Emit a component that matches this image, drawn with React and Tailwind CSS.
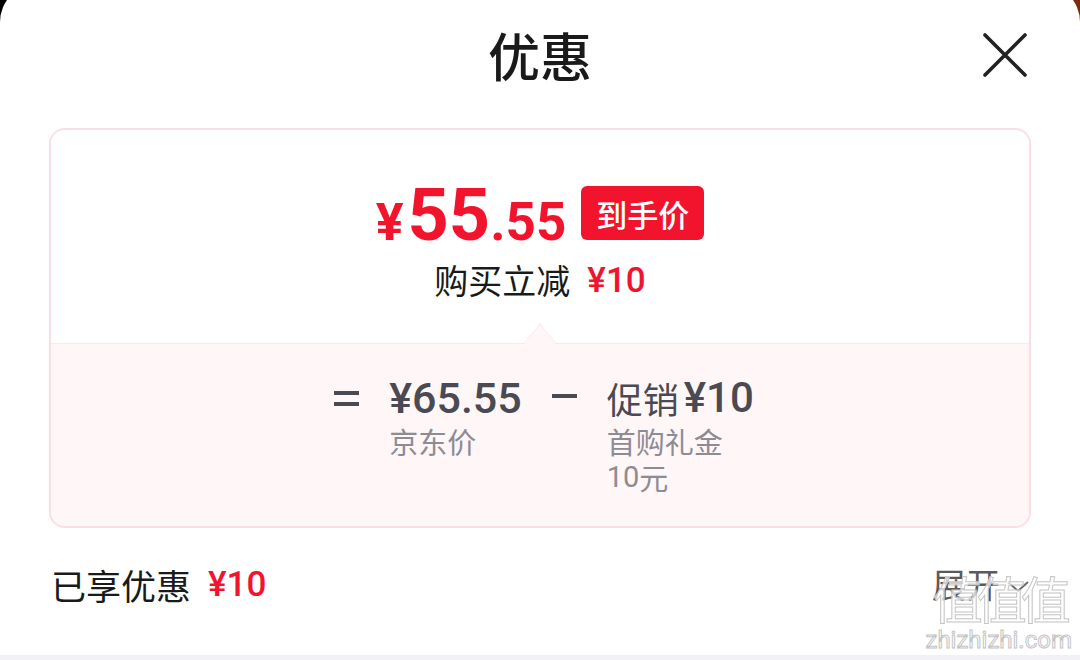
import React from "react";

const NUM = { fontFamily: 'Roboto, "Noto Sans CJK SC", sans-serif' };
const CJK = { fontFamily: '"Noto Sans CJK SC", "Noto Sans", sans-serif' };

function CloseIcon() {
  return (
    <svg width="44" height="44" viewBox="0 0 44 44" fill="none">
      <path d="M2 2 L42 42 M42 2 L2 42" stroke="#222" strokeWidth="3.6" strokeLinecap="round" />
    </svg>
  );
}

export default function App() {
  return (
    <div className="relative w-[1080px] h-[660px] overflow-hidden bg-[linear-gradient(90deg,#000_50%,#7a2c08_50%)]" style={CJK}>
      <div className="mt-[-16px] pt-[16px] h-[671px] rounded-t-[38px] bg-white flex flex-col">
        {/* header */}
        <div className="h-[110px] flex items-center justify-between px-[53px]">
          <div className="w-[44px]" />
          <div className="text-[52px] font-medium text-[#1a1a1a] leading-none">优惠</div>
          <CloseIcon />
        </div>

        {/* card */}
        <div className="mt-[18px] mx-[49px] h-[400px] border-2 border-[#fcdce5] rounded-[16px] overflow-hidden flex flex-col">
          <div className="h-[213px] bg-white flex flex-col items-center pt-[50px]">
            <div className="flex items-end">
              <div className="flex items-baseline text-[#f2132d] font-bold leading-none mb-[-12px]" style={NUM}>
                <span className="text-[52px]">¥</span>
                <span className="text-[72px] ml-[4px]">55</span>
                <span className="text-[53px]">.55</span>
              </div>
              <div className="ml-[15px] h-[54px] px-[15px] rounded-[6px] bg-[#f2132d] text-white text-[31px] font-medium flex items-center leading-none">
                到手价
              </div>
            </div>
            <div className="mt-[20px] h-[40px] flex items-center text-[34px] leading-none text-[#1a1a1a]">
              <span>购买立减</span>
              <span className="ml-[17px] text-[35px] text-[#f2132d] font-medium" style={NUM}>¥10</span>
            </div>
          </div>

          <div className="relative flex-1 bg-[#fff6f8] border-t border-[#fde6ec]">
            <svg className="absolute left-1/2 -translate-x-1/2 top-[-21px]" width="32" height="21" viewBox="0 0 32 21">
              <polygon points="0,21 16,1 32,21" fill="#fff6f8" />
              <path d="M0 20.5 L16 1 L32 20.5" fill="none" stroke="#fde6ec" strokeWidth="1" />
            </svg>
            <div className="flex justify-center gap-[30px] pt-[31px] pl-[8px] text-[#4a4a52]">
              <div className="h-[46px] w-[25px] flex flex-col justify-center gap-[7px]">
                <div className="h-[4px] bg-[#4a4a52]" />
                <div className="h-[4px] bg-[#4a4a52]" />
              </div>
              <div className="flex flex-col">
                <div className="h-[46px] flex items-center text-[43px] font-medium leading-none" style={NUM}>¥65.55</div>
                <div className="mt-[2px] h-[36px] flex items-center text-[29px] leading-none text-[#8c8c94]">京东价</div>
              </div>
              <div className="h-[46px] w-[25px] flex items-center">
                <div className="h-[4px] w-full bg-[#4a4a52] mt-[-4px]" />
              </div>
              <div className="flex flex-col">
                <div className="h-[46px] flex items-center text-[36px] leading-none">
                  <span>促销</span>
                  <span className="ml-[5px] text-[42px] font-medium" style={NUM}>¥10</span>
                </div>
                <div className="mt-[2px] h-[36px] flex items-center text-[29px] leading-none text-[#8c8c94]">首购礼金</div>
                <div className="h-[36px] flex items-center text-[29px] leading-none text-[#8c8c94]">
                  <span style={NUM}>10</span>
                  <span>元</span>
                </div>
              </div>
            </div>
          </div>
        </div>

        {/* bottom row */}
        <div className="mt-[36px] h-[40px] flex items-center justify-between pl-[51px] pr-[50px]">
          <div className="flex items-center text-[35px] leading-none text-[#1a1a1a]">
            <span>已享优惠</span>
            <span className="ml-[17px] text-[#f2132d] font-medium" style={NUM}>¥10</span>
          </div>
          <div className="flex items-center text-[34px] leading-none text-[#5a5a5a]">
            <span>展开</span>
            <svg className="ml-[6px] mt-[6px]" width="24" height="14" viewBox="0 0 24 14" fill="none">
              <path d="M2 2 L12 11 L22 2" stroke="#6a6a6a" strokeWidth="2" />
            </svg>
          </div>
        </div>
      </div>
      <div className="h-[5px] bg-[#f2f2f6]" />

      {/* watermark */}
      <div className="pointer-events-none absolute right-[8px] bottom-[8px] flex flex-col items-center">
        <div className="text-[50px] leading-none text-white/70 [-webkit-text-stroke:1px_#c4c4c4] tracking-[-6px] mb-[6px]">值值值</div>
        <div className="text-[24px] leading-none text-white [-webkit-text-stroke:1px_#c4c4c4]" style={NUM}>zhizhizhi.com</div>
      </div>
    </div>
  );
}
